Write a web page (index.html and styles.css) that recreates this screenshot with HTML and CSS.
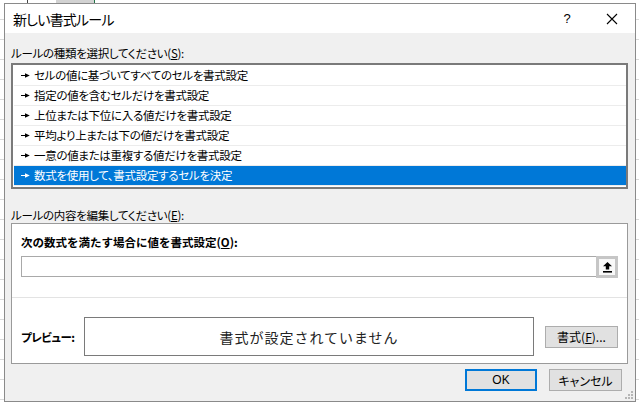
FILE: index.html
```html
<!DOCTYPE html>
<html lang="ja">
<head>
    <meta charset="UTF-8">
    <title>新しい書式ルール</title>
    <link rel="stylesheet" href="styles.css">
</head>
<body>
    <div class="dialog">
        <div class="titlebar">
            <span class="title">新しい書式ルール</span>
            <span class="help">?</span>
            <span class="close">
                <svg width="12" height="12" viewBox="0 0 12 12"><path d="M1 1L11 11M11 1L1 11" stroke="#000" stroke-width="1.1"/></svg>
            </span>
        </div>
        <div class="main">
            <div class="label">ルールの種類を選択してください(<u>S</u>):</div>
            <ul class="rules">
                <li><svg class="arrow" width="9" height="5" viewBox="0 0 9 5"><path d="M0 2h5v1H0z M4 0.3L8.8 2.5L4 4.7z" fill="currentColor"/></svg>セルの値に基づいてすべてのセルを書式設定</li>
                <li><svg class="arrow" width="9" height="5" viewBox="0 0 9 5"><path d="M0 2h5v1H0z M4 0.3L8.8 2.5L4 4.7z" fill="currentColor"/></svg>指定の値を含むセルだけを書式設定</li>
                <li><svg class="arrow" width="9" height="5" viewBox="0 0 9 5"><path d="M0 2h5v1H0z M4 0.3L8.8 2.5L4 4.7z" fill="currentColor"/></svg>上位または下位に入る値だけを書式設定</li>
                <li><svg class="arrow" width="9" height="5" viewBox="0 0 9 5"><path d="M0 2h5v1H0z M4 0.3L8.8 2.5L4 4.7z" fill="currentColor"/></svg>平均より上または下の値だけを書式設定</li>
                <li><svg class="arrow" width="9" height="5" viewBox="0 0 9 5"><path d="M0 2h5v1H0z M4 0.3L8.8 2.5L4 4.7z" fill="currentColor"/></svg>一意の値または重複する値だけを書式設定</li>
                <li class="selected"><svg class="arrow" width="9" height="5" viewBox="0 0 9 5"><path d="M0 2h5v1H0z M4 0.3L8.8 2.5L4 4.7z" fill="currentColor"/></svg>数式を使用して、書式設定するセルを決定</li>
            </ul>

            <div class="label label-edit">ルールの内容を編集してください(<u>E</u>):</div>
            <div class="panel">
                <div class="panel-top">
                    <div class="field-label">次の数式を満たす場合に値を書式設定(<u>O</u>):</div>
                    <div class="formula">
                        <span class="collapse-btn">
                            <svg width="9" height="11" viewBox="0 0 9 11"><path d="M4.5 0L9 4.2H6.2V7.5H2.8V4.2H0z" fill="#000"/><rect x="0" y="9" width="9" height="1.6" fill="#000"/></svg>
                        </span>
                    </div>
                </div>
                <div class="preview-row">
                    <span class="preview-label">プレビュー:</span>
                    <div class="preview-box">書式が設定されていません</div>
                    <button class="btn format">書式(<u>F</u>)...</button>
                </div>
            </div>

            <div class="actions">
                <button class="btn ok">OK</button>
                <button class="btn cancel">キャンセル</button>
            </div>
        </div>
        <svg class="grip" width="9" height="9" viewBox="0 0 9 9">
            <rect x="6" y="0" width="2" height="2" fill="#b5b5b5"/>
            <rect x="3" y="3" width="2" height="2" fill="#b5b5b5"/>
            <rect x="6" y="3" width="2" height="2" fill="#b5b5b5"/>
            <rect x="0" y="6" width="2" height="2" fill="#b5b5b5"/>
            <rect x="3" y="6" width="2" height="2" fill="#b5b5b5"/>
            <rect x="6" y="6" width="2" height="2" fill="#b5b5b5"/>
        </svg>
    </div>
</body>
</html>
```

FILE: styles.css
```css
body {
    margin: 0;
    padding: 3px 0 0 4px;
    font-family: "Noto Sans CJK JP", "Noto Sans", sans-serif;
    font-size: 11px;
    color: #000;
    background-color: #fff;
    background-image:
        linear-gradient(to right, transparent 27px, #444 27px, #444 28px, transparent 28px, transparent 56px, #d2d2d2 56px, #d2d2d2 94px, #217346 94px, #217346 95px, transparent 95px),
        repeating-linear-gradient(to bottom, transparent 0, transparent 19px, #dadada 19px, #dadada 20px);
    background-size: 100% 3px, 100% 100%;
    background-repeat: no-repeat, repeat;
}
.dialog {
    position: relative;
    width: 630px;
    border: 1px solid #8a8a8a;
    background-color: #f0f0f0;
}
.titlebar {
    height: 29px;
    background-color: #fff;
    display: flex;
    align-items: center;
    padding-left: 8px;
}
.title {
    flex: 1;
    font-size: 14px;
    letter-spacing: -0.8px;
    font-feature-settings: "palt";
    line-height: 20px;
}
.help {
    width: 20px;
    text-align: center;
    font-family: "Liberation Sans", sans-serif;
    font-size: 13px;
    margin-right: 25px;
}
.close {
    width: 20px;
    height: 12px;
    margin-right: 13px;
    display: flex;
    justify-content: center;
}
.main {
    padding: 12px 7px 10px 6px;
}
.label {
    height: 16px;
    line-height: 16px;
    font-size: 11.5px;
    letter-spacing: -0.3px;
    font-feature-settings: "palt";
}
u {
    text-underline-offset: 1px;
}
.rules {
    list-style: none;
    margin: 2px 0 0;
    padding: 1px 0 1px 1px;
    border: 2px solid #7a7a7a;
    background-color: #fff;
}
.rules li {
    height: 19px;
    line-height: 19px;
    border-bottom: 1px solid #ececec;
    display: flex;
    align-items: center;
    padding-left: 7px;
    font-size: 11.5px;
    letter-spacing: -0.3px;
    font-feature-settings: "palt";
}
.rules li.selected {
    background-color: #0078d7;
    color: #fff;
}
.arrow {
    margin-right: 4px;
    flex: none;
}
.label-edit {
    margin-top: 18px;
}
.panel {
    border: 1px solid #9a9a9a;
    background-color: #fff;
}
.panel-top {
    padding: 10px 9px 20px;
    border-bottom: 1px solid #e3e3e3;
}
.field-label {
    font-weight: bold;
    font-size: 11.5px;
    line-height: 16px;
    height: 16px;
}
.formula {
    margin-top: 6px;
    height: 19px;
    border: 1px solid #a9a9a9;
    display: flex;
    justify-content: flex-end;
}
.collapse-btn {
    box-sizing: border-box;
    width: 22px;
    height: 22px;
    margin: -1px -1px 0 0;
    border: 3px solid #c6c6c6;
    background-color: #f8f8f8;
    display: flex;
    align-items: center;
    justify-content: center;
}
.preview-row {
    display: flex;
    align-items: center;
    padding: 19px 9px 7px;
}
.preview-label {
    flex: none;
    width: 63px;
    white-space: nowrap;
    font-weight: bold;
    font-size: 11.5px;
    letter-spacing: -0.5px;
    font-feature-settings: "palt";
}
.preview-box {
    flex: 1;
    height: 37px;
    border: 1px solid #7a7a7a;
    display: flex;
    align-items: center;
    justify-content: center;
    font-size: 14px;
    letter-spacing: 1px;
    color: #222;
}
.btn {
    box-sizing: border-box;
    height: 22px;
    padding: 0;
    border: 1px solid #adadad;
    background-color: #e1e1e1;
    font-family: "Noto Sans CJK JP", "Noto Sans", sans-serif;
    font-size: 12px;
    color: #000;
    font-feature-settings: "palt";
}
.btn.format {
    flex: none;
    width: 73px;
    margin-left: 11px;
}
.actions {
    display: flex;
    justify-content: flex-end;
    gap: 12px;
    margin-top: 5px;
    padding-right: 6px;
}
.btn.ok {
    width: 72px;
    border: 2px solid #0078d7;
    font-family: "Liberation Sans", sans-serif;
}
.btn.cancel {
    width: 73px;
}
.grip {
    position: absolute;
    right: 1px;
    bottom: 1px;
}
```
